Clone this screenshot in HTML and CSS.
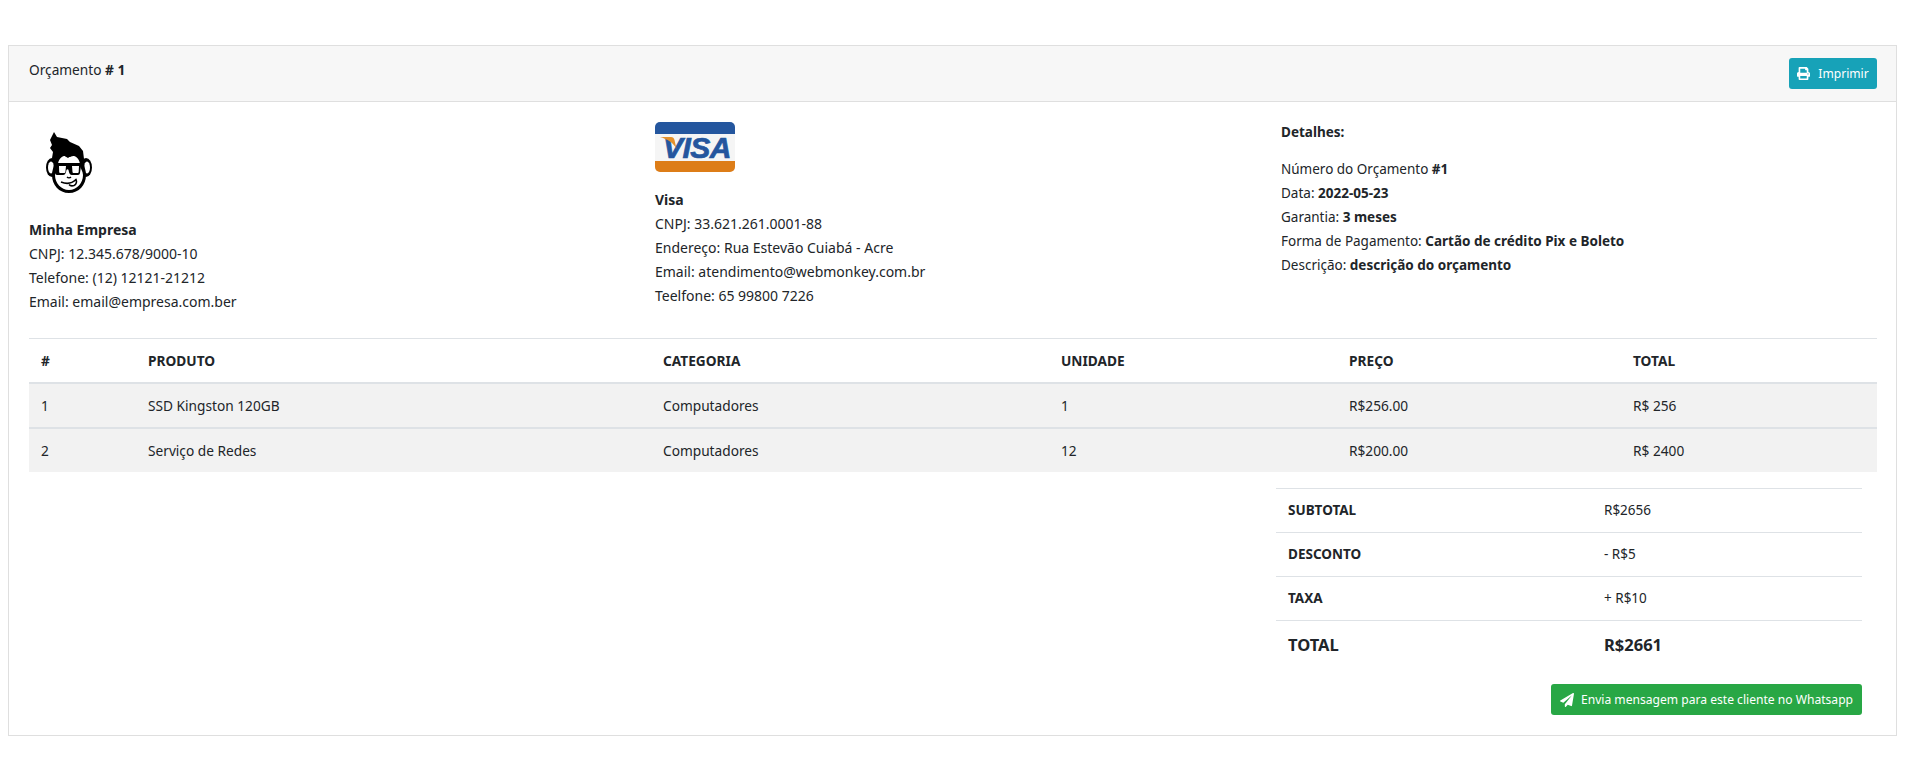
FILE: index.html
```html
<!DOCTYPE html>
<html lang="pt-BR">
<head>
<meta charset="utf-8">
<title>Orçamento</title>
<link rel="stylesheet" href="styles.css">
</head>
<body>
<section class="card">
  <header class="card-header">
    <span>Orçamento <strong># 1</strong></span>
    <button class="btn btn-info">
      <svg class="icon" viewBox="0 0 512 512"><path fill="currentColor" d="M448 192V77.25c0-8.49-3.37-16.62-9.37-22.63L393.37 9.37c-6-6-14.14-9.37-22.63-9.37H96C78.33 0 64 14.33 64 32v160c-35.35 0-64 28.65-64 64v112c0 8.84 7.16 16 16 16h48v96c0 17.67 14.33 32 32 32h320c17.67 0 32-14.33 32-32v-96h48c8.84 0 16-7.16 16-16V256c0-35.35-28.65-64-64-64zm-64 256H128v-96h256v96zm0-224H128V64h192v48c0 8.84 7.16 16 16 16h48v96zm48 72c-13.25 0-24-10.75-24-24 0-13.26 10.75-24 24-24s24 10.74 24 24c0 13.25-10.75 24-24 24z"/></svg>
      Imprimir
    </button>
  </header>
  <div class="card-body">
    <div class="info-grid">
      <div class="info-col">
        <svg class="logo" viewBox="-1 2 80 80">
          <ellipse cx="22" cy="47.500" rx="6" ry="9.500" fill="#000"/>
          <ellipse cx="56" cy="47.500" rx="6" ry="9.500" fill="#000"/>
          <ellipse cx="21" cy="47.500" rx="3" ry="6" fill="#fff"/>
          <ellipse cx="57" cy="47.500" rx="3" ry="6" fill="#fff"/>
          <path fill="#000" d="M39 30c-9 0-15 5-15 13 0 4-2 7-2 12 0 10 7 18 17 18s17-8 17-18c0-5-2-8-2-12 0-8-6-13-15-13z"/>
          <path fill="#fff" d="M39 37c-2 0-3-1.500-5-1-2 .5-6 3-6 9 0 3-3 6-3 10 0 8 6 15 14 15s14-7 14-15c0-4-3-7-3-10 0-6-4-8.500-6-9-2-.5-3 1-5 1z"/>
          <path fill="#000" d="M24 12l3 5 10 2 3 3 9 4 4 5 1 8-1 2-5-5-6-1-4 3-5-3-6 3-3 5-2-5 1-6-3-4 2-3-2-5z"/>
          <path fill="#000" d="M25 43h28v3h-2l-1 7c-.2 1-1 2-2 2h-6c-2 0-3-2-3.500-5-.3-1-1.700-1-2 0-.5 3-1.500 5-3.500 5h-6c-1 0-1.800-1-2-2l-1-7h1z"/>
          <path fill="#fff" d="M29 46h7l-.6 6c-.1.700-.6 1-1.400 1h-3.500c-.8 0-1.200-.3-1.300-1zM42 46h7l-.3 6c-.1.700-.6 1-1.400 1h-3.500c-.8 0-1.200-.3-1.300-1z"/>
          <path fill="none" stroke="#000" stroke-width="1.600" d="M31 62c5 2 11 1.500 15-2.500 1 2 .5 5-2 6-2 .7-4 .2-5-1"/>
          <path fill="none" stroke="#000" stroke-width="1.400" d="M37 57c1 1 3 1 4 0"/>
        </svg>
        <p><strong>Minha Empresa</strong></p>
        <p>CNPJ: 12.345.678/9000-10</p>
        <p>Telefone: (12) 12121-21212</p>
        <p>Email: email@empresa.com.ber</p>
      </div>
      <div class="info-col">
        <svg class="visa" viewBox="0 0 80 50">
          <rect width="80" height="50" rx="5" fill="#f5f5f5"/>
          <path fill="#24569e" d="M0 12V5a5 5 0 0 1 5-5h70a5 5 0 0 1 5 5v7z"/>
          <path fill="#dd7d18" d="M0 39h80v6a5 5 0 0 1-5 5H5a5 5 0 0 1-5-5z"/>
          <text class="visa-text" x="42" y="36" text-anchor="middle">VISA</text>
          <path fill="#e3912c" d="M5 15h11c2 0 3 1 3.500 3l2 9C19 21 12 17 5 15z"/>
        </svg>
        <p><strong>Visa</strong></p>
        <p>CNPJ: 33.621.261.0001-88</p>
        <p>Endereço: Rua Estevão Cuiabá - Acre</p>
        <p>Email: atendimento@webmonkey.com.br</p>
        <p>Teelfone: 65 99800 7226</p>
      </div>
      <div class="info-col details">
        <p class="details-title"><strong>Detalhes:</strong></p>
        <p>Número do Orçamento <strong>#1</strong></p>
        <p>Data: <strong>2022-05-23</strong></p>
        <p>Garantia: <strong>3 meses</strong></p>
        <p>Forma de Pagamento: <strong>Cartão de crédito Pix e Boleto</strong></p>
        <p>Descrição: <strong>descrição do orçamento</strong></p>
      </div>
    </div>

    <table class="items">
      <colgroup>
        <col class="c-num"><col class="c-prod"><col class="c-cat"><col class="c-uni"><col class="c-preco"><col class="c-total">
      </colgroup>
      <thead>
        <tr><th>#</th><th>PRODUTO</th><th>CATEGORIA</th><th>UNIDADE</th><th>PREÇO</th><th>TOTAL</th></tr>
      </thead>
      <tbody>
        <tr><td>1</td><td>SSD Kingston 120GB</td><td>Computadores</td><td>1</td><td>R$256.00</td><td>R$ 256</td></tr>
        <tr><td>2</td><td>Serviço de Redes</td><td>Computadores</td><td>12</td><td>R$200.00</td><td>R$ 2400</td></tr>
      </tbody>
    </table>

    <div class="summary-wrap">
      <table class="summary">
        <colgroup><col class="s-label"><col></colgroup>
        <tr><th>SUBTOTAL</th><td>R$2656</td></tr>
        <tr><th>DESCONTO</th><td>- R$5</td></tr>
        <tr><th>TAXA</th><td>+ R$10</td></tr>
        <tr class="grand"><th>TOTAL</th><th>R$2661</th></tr>
      </table>
      <button class="btn btn-success">
        <svg class="icon icon-plane" viewBox="0 0 512 512"><path fill="currentColor" d="M476 3.2L12.500 270.600c-18.100 10.400-15.800 35.600 2.200 43.200L121 358.400l287.300-253.200c5.500-4.900 13.300 2.600 8.600 8.300L176 407v80.500c0 23.600 28.500 32.900 42.500 15.800L282 426l124.600 52.200c14.200 6 30.400-2.900 33-18.200l72-432C515 7.800 493.300-6.800 476 3.200z"/></svg>
        Envia mensagem para este cliente no Whatsapp
      </button>
    </div>
  </div>
</section>
</body>
</html>
```
FILE: styles.css
```css
* { box-sizing: border-box; }
html, body { margin: 0; background: #fff; }
body {
  padding: 45px 11px 45px 8px;
  font-family: "Noto Sans", "Open Sans", sans-serif;
  font-size: 13.7px;
  line-height: 24px;
  color: #212529;
}
strong, th { font-weight: 700; }
p { margin: 0; }

.card { border: 1px solid #dfdfdf; }
.card-header {
  display: flex;
  justify-content: space-between;
  align-items: flex-start;
  height: 56px;
  padding: 12px 19px 0 20px;
  background: #f7f7f7;
  border-bottom: 1px solid #dfdfdf;
}
.btn {
  display: inline-flex;
  align-items: center;
  justify-content: center;
  gap: 8px;
  height: 31px;
  border: 0;
  border-radius: 3px;
  color: #fff;
  font: 12.1px "Noto Sans", "Open Sans", sans-serif;
}
.btn-info { width: 88px; background: #17a2b8; }
.btn-success { width: 311px; gap: 7px; background: #28a745; }
.icon { width: 13px; height: 13px; flex: none; }
.icon-plane { width: 14px; height: 14px; }

.card-body { padding: 20px 19px 20px 20px; }
.info-grid {
  display: grid;
  grid-template-columns: repeat(3, 1fr);
  gap: 30px;
  padding-bottom: 24px;
  border-bottom: 1px solid #dee2e6;
  font-size: 14px;
}
.logo { display: block; width: 80px; height: 80px; margin-bottom: 16px; }
.visa { display: block; width: 80px; height: 50px; margin-bottom: 16px; }
.visa-text { font: italic 700 30px "Liberation Sans", sans-serif; fill: #24569e; stroke: #24569e; stroke-width: .7px; letter-spacing: -.5px; }
.details { font-size: 13.5px; margin-top: -2px; }
.details-title { margin-bottom: 13px; }

table { width: 100%; border-collapse: collapse; table-layout: fixed; line-height: 21px; }
th, td { padding: 11px 12px; text-align: left; }
.c-num { width: 107px; }
.c-prod { width: 515px; }
.c-cat { width: 398px; }
.c-uni { width: 288px; }
.c-preco { width: 284px; }
.items thead th { border-bottom: 2px solid #dee2e6; }
.items tbody td { background: #f2f2f2; }
.items tbody tr + tr td { border-top: 2px solid #dee2e6; }

.summary-wrap {
  display: flex;
  flex-direction: column;
  align-items: flex-end;
  padding: 16px 15px 0 0;
}
.summary { width: 586px; font-size: 13.5px; }
.s-label { width: 316px; }
.summary tr td, .summary tr th { border-top: 1px solid #dee2e6; }
.summary tr.grand th { font-size: 16.5px; padding-top: 13px; padding-bottom: 12px; }
.summary + .btn { margin-top: 17px; }
```
